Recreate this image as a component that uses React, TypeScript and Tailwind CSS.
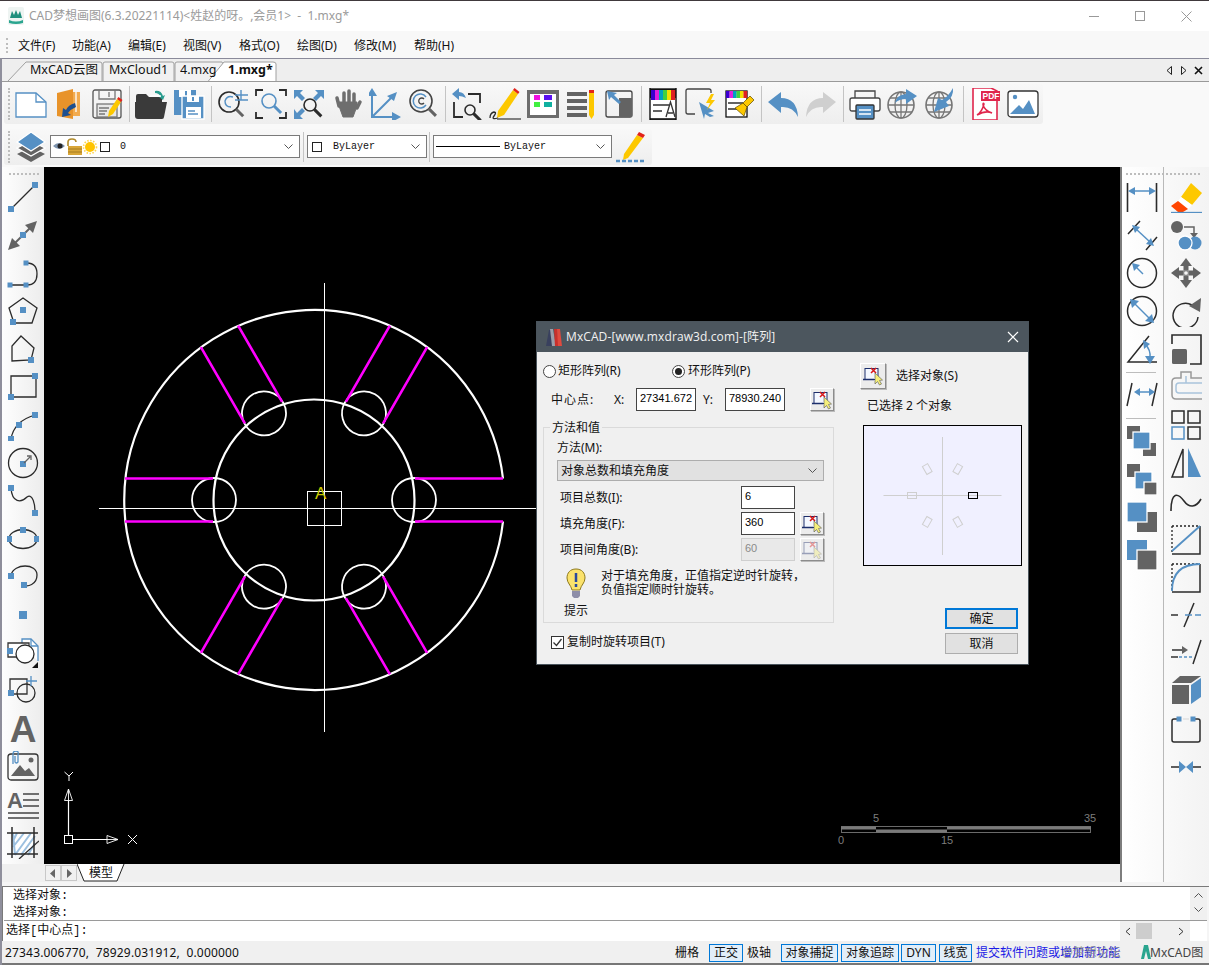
import type { ReactNode } from 'react';

const B = '#5590c4';
const G = '#636363';
const K = '#2b2b2b';
const Y = '#fdc800';
const R = '#e2231a';

function Ic({ children }: { children: ReactNode }) {
  return (
    <svg width={32} height={32} viewBox="0 0 32 32" fill="none" stroke={K} strokeWidth={1.3} className="shrink-0">
      {children}
    </svg>
  );
}

const Sq = ({ x, y, s = 6 }: { x: number; y: number; s?: number }) => (
  <rect x={x - s / 2} y={y - s / 2} width={s} height={s} fill={B} stroke="none" />
);

const Mag = ({ x, y, r, c = K, h = G }: { x: number; y: number; r: number; c?: string; h?: string }) => (
  <>
    <circle cx={x} cy={y} r={r} stroke={c} strokeWidth={1.6} />
    <path d={`M${x + r * 0.72} ${y + r * 0.72}L${x + r * 0.72 + 7} ${y + r * 0.72 + 7}`} stroke={h} strokeWidth={3} />
  </>
);

const Rainbow = ({ x, y, w, h }: { x: number; y: number; w: number; h: number }) => (
  <>
    {['#3a00d0', '#e020e0', '#00a0c0', '#40d040', '#f0e000', '#e02020'].map((c, i) => (
      <rect key={c} x={x + (i * w) / 6} y={y} width={w / 6 + 0.2} height={h} fill={c} stroke="none" />
    ))}
  </>
);

const Globe = () => (
  <>
    <circle cx={14} cy={17} r={13} stroke="#777" strokeWidth={1.6} />
    <ellipse cx={14} cy={17} rx={6} ry={13} stroke="#777" strokeWidth={1.3} />
    <path d="M14 4V30M1 17H27M3 10H25M3 24H25" stroke="#777" strokeWidth={1.3} />
  </>
);

const topIcons: ReactNode[] = [
  <Ic><path d="M1 5H21L31 14V29H1Z" stroke={B} fill="#fff" /><path d="M21 5V14H31" stroke={B} /></Ic>,
  <Ic><path d="M16 4H27V28H16Z" fill="#f2ab4f" stroke="none" /><path d="M4 5L20 1V31L4 28Z" fill="#e8932a" stroke="none" /><path d="M23 4V24" stroke="#fff" /><path d="M22 15Q15 17 13 22L10 20 9 29 18 27 15 25Q18 21 23 19Z" fill="#1d4f8f" stroke="none" /></Ic>,
  <Ic><rect x="2" y="2" width="28" height="28" rx="2" stroke="#555" /><path d="M8 2V11H24V2M18 4V9" stroke="#777" /><rect x="6" y="16" width="20" height="13" fill="#e8e8e8" stroke="#777" /><path d="M8 20H18M8 23H16M8 26H14" stroke="#777" /><path d="M26 11l4 3-8 12-5 3 1-6z" fill={Y} stroke="none" /><path d="M26 11l1.500-2 4 3-1.500 2z" fill={R} stroke="none" /></Ic>,
  'sep',
  <Ic><path d="M1 8Q1 6 3 6H11L14 9H27V14H1Z" fill="#3a3a3a" stroke="none" /><path d="M0 14H32L29 29Q29 31 27 31H3Q0 31 0 28Z" fill="#3a3a3a" stroke="none" /><path d="M20 3Q26 2 28 8L30 7 28 12 24 9 26 9Q24 5 20 5Z" fill="#2a9d8f" stroke="none" /><path d="M15 8H26" stroke="#fff" /></Ic>,
  <Ic><path d="M1 2H23V27H1Z" fill={B} stroke="none" /><path d="M6 2H18V9H6Z" fill="#fff" stroke="none" /><path d="M13 3V8" stroke={B} strokeWidth={2} /><path d="M9 8H31V31H9Z" fill={B} stroke="#fff" /><path d="M14 8H26V14H14Z" fill="#fff" stroke="none" /><path d="M20 9V13" stroke={B} strokeWidth={2} /><path d="M13 19H28V30H13Z" fill="#fff" stroke="none" /><path d="M15 23H22M15 26H25" stroke={B} /></Ic>,
  'sep',
  <Ic><Mag x={12} y={14} r={10} /><path d="M16 9Q10 7 8 13Q8 19 14 19" stroke={B} strokeWidth={1.4} /><path d="M24 2V12M18 7H31M18 12H31" stroke={B} strokeWidth={1.4} /></Ic>,
  <Ic><path d="M1 8V2H8M24 2H31V8M1 24V30H8M31 24V30H24" strokeWidth={1.8} /><Mag x={14} y={13} r={7} c={B} h={B} /></Ic>,
  <Ic><path d="M1 11V2H10L7 5 12 10 9 13 4 8ZM31 11V2H22L25 5 20 10 23 13 28 8ZM1 21V31H10L7 28 12 23 9 20 4 25Z" fill={B} stroke="none" /><Mag x={17} y={17} r={6} c={K} h={K} /></Ic>,
  <Ic><g stroke="#6e6e6e" strokeLinecap="round"><path d="M8 18L6 10M13 15V5M18 15V3M23 16V6" strokeWidth={3.5} /><path d="M26 20L29 14" strokeWidth={3.5} /><path d="M8 18L12 29H22L26 18V14H8Z" fill="#6e6e6e" strokeWidth={1} /></g></Ic>,
  <Ic><path d="M3 6V29H29M3 29L24 8" stroke={B} strokeWidth={2} /><path d="M3 0L8 8H-2ZM32 29L23 24V34ZM28 4L25 13 18 8Z" fill={B} stroke="none" /></Ic>,
  <Ic><Mag x={14} y={13} r={11} c="#444" /><path d="M19 9A7 7 0 1 0 19 17" stroke={B} strokeWidth={1.5} /><path d="M17 11A3 3 0 1 0 17 15" stroke="#444" /></Ic>,
  'sep',
  <Ic><path d="M17 6H29V15M3 14V29H12" stroke={K} strokeWidth={1.8} /><Mag x={19} y={22} r={5} c={K} h={K} /><path d="M1 6L8 0V4Q13 4 15 10 11 8 8 8V12Z" fill={B} stroke="none" /></Ic>,
  <Ic><path d="M24 2l5 4-14 21-7 3 1-7z" fill={Y} stroke="none" /><path d="M24 2l1.500-2 5 4-1.500 2z" fill={R} stroke="none" /><path d="M1 30Q1 25 5 24 8 24 5 28T9 30" /><path d="M8 31H32" stroke={G} strokeWidth={1.6} /></Ic>,
  <Ic><rect x="0" y="2" width="32" height="28" fill="#6d6d6d" stroke="none" /><rect x="3" y="6" width="26" height="21" fill="#fff" stroke="none" /><rect x="7" y="7" width="6" height="5" fill="#f010e0" stroke="none" /><rect x="7" y="14" width="6" height="5" fill="#40f040" stroke="none" /><rect x="17" y="7" width="8" height="5" fill="#5a10f0" stroke="none" /><rect x="17" y="14" width="8" height="5" fill="#10b0a0" stroke="none" /></Ic>,
  <Ic><path d="M2 6H22M2 13H22M2 20H22M2 27H22" stroke={G} strokeWidth={4} /><path d="M24 4H29V27L26.500 31 24 27Z" fill={Y} stroke="none" /><path d="M24 2H29V5H24Z" fill={R} stroke="none" /></Ic>,
  <Ic><rect x="3" y="3" width="26" height="26" rx="2" stroke="#444" /><path d="M16 10H29V29H16Z" fill={G} stroke="none" /><path d="M16 16L8 9 6 12 4 3 14 5 11 7 18 14Z" fill={B} stroke="none" /></Ic>,
  'sep',
  <Ic><rect x="3" y="0" width="26" height="32" fill="#fff" stroke="#111" strokeWidth={1.4} /><rect x="3" y="1" width="26" height="9" fill="#111" stroke="none" /><Rainbow x={4} y={2} w={24} h={10} /><path d="M6 17H22M6 23H15" stroke={G} strokeWidth={2} /><path d="M19 29L23.500 14 28 29M21 25H26" stroke="#333" /><path d="M3 31H29" stroke="#111" strokeWidth={1.6} /></Ic>,
  <Ic><path d="M26 5V3Q26 1 24 1H3Q1 1 1 3V24Q1 26 3 26H10" stroke="#444" /><path d="M13 17L28 26 22 28 28 31 24 32 19 29 18 34Z" transform="translate(1,-3)" fill={B} stroke="none" /><path d="M26 6L21 15H25L22 22 30 12H26L29 6Z" fill={Y} stroke="none" /></Ic>,
  <Ic><rect x="3" y="3" width="21" height="26" fill="#fff" stroke="#111" /><Rainbow x={3} y={3} w={21} h={7} /><path d="M5 15H20M5 21H14" stroke={G} strokeWidth={2} /><path d="M27 8L31 12 24 19 20 15Z" fill={Y} stroke="#5c4700" strokeWidth={0.7} /><path d="M20 15L24 19 21 28 12 20Z" fill={Y} stroke="#5c4700" strokeWidth={0.7} /></Ic>,
  'sep',
  <Ic><path d="M1 14L14 4V10Q30 10 31 29 26 18 14 19V25Z" fill={B} stroke="none" /></Ic>,
  <Ic><path d="M31 14L18 4V10Q2 10 1 29 6 18 18 19V25Z" fill="#cfcfcf" stroke="none" /></Ic>,
  'sep',
  <Ic><path d="M6 10V3H26V10" stroke="#444" /><path d="M1 21V12Q1 10 3 10H29Q31 10 31 12V21Q31 23 29 23H3Q1 23 1 21Z" fill="#fff" stroke="#444" /><rect x="7" y="17" width="18" height="14" rx="1" fill={B} stroke="#333" /><path d="M10 22H22M10 26H22" stroke="#fff" /></Ic>,
  <Ic><Globe /><path d="M8 15Q9 7 19 6V1L30 8 19 16V11Q12 11 8 15Z" fill={B} stroke="none" /></Ic>,
  <Ic><Globe /><path d="M28 0Q29 9 21 14L24 18 9 24 13 10 17 12Q23 9 28 0Z" fill={B} stroke="none" /></Ic>,
  'sep',
  <Ic><path d="M4 0H22L28 3V32H4Z" fill="#fff" stroke="#e0264c" strokeWidth={1.6} /><rect x="12" y="3" width="19" height="10" fill="#e0264c" stroke="none" /><text x="13.500" y="11" fontSize={8.500} fontWeight={700} fontFamily="Liberation Sans" fill="#fff" stroke="none">PDF</text><path d="M8 27Q13 24 15 16 14 14 14 17 16 23 23 25 17 22 8 27Z" stroke="#e0264c" strokeWidth={1.5} /></Ic>,
  <Ic><rect x="1" y="3" width="30" height="26" rx="3" fill="#fff" stroke="#333" /><circle cx={8} cy={9} r={2.200} fill={B} stroke="none" /><path d="M3 26L12 17 16 21 22 12 28 26Z" fill={B} stroke="none" /></Ic>,
];

const leftIcons: ReactNode[] = [
  <Ic><path d="M4 28L28 4" /><Sq x={28} y={4} /><Sq x={4} y={28} /></Ic>,
  <Ic><path d="M6 26L26 6" stroke={G} strokeWidth={2} /><path d="M30 2L26 14 18 6ZM1 31L5 19 13 27Z" fill={G} stroke="none" /><Sq x={16} y={16} /></Ic>,
  <Ic><path d="M3 28H20Q30 28 30 17T20 6" /><Sq x={3} y={28} s={5} /><Sq x={19} y={28} s={5} /><Sq x={19} y={6} s={5} /></Ic>,
  <Ic><path d="M16 3L30 13 25 28H7L2 13Z" /><Sq x={16} y={15} /><Sq x={6} y={27} /></Ic>,
  <Ic><path d="M14 3L27 15 24 27 5 28V13Z" /><Sq x={24} y={27} /></Ic>,
  <Ic><path d="M4 5H29V26H4Z" /><Sq x={28} y={5} /><Sq x={4} y={26} /></Ic>,
  <Ic><path d="M4 30Q7 12 28 6" /><Sq x={4} y={30} /><Sq x={12} y={16} /><Sq x={28} y={6} /></Ic>,
  <Ic><circle cx={16} cy={16} r={14.500} /><Sq x={16} y={17} /><path d="M17 16L23 10M20 9H24V13" stroke={G} /></Ic>,
  <Ic><path d="M4 3C5 18 14 18 20 12 26 8 28 20 28 27" /><Sq x={4} y={3} /><Sq x={28} y={28} /></Ic>,
  <Ic><ellipse cx={16} cy={16} rx={14} ry={9.500} /><Sq x={16} y={7} /><Sq x={2} y={16} /><Sq x={30} y={16} /></Ic>,
  <Ic><path d="M4 14C7 2 30 2 30 14 30 24 20 26 17 24" /><Sq x={4} y={15} /><Sq x={17} y={24} /></Ic>,
  <Ic><Sq x={16} y={16} s={8} /></Ic>,
  <Ic><path d="M15 8V2H24L31 9V24" stroke={B} fill="#fff" /><path d="M24 2V9H31" stroke={B} /><path d="M1 6H22V20H1Z" fill="#fff" stroke="#333" /><circle cx={18} cy={17} r={9} fill="#fff" stroke={K} /><Sq x={3} y={14} /><path d="M25 31L31 25V31Z" fill="#111" stroke="none" /></Ic>,
  <Ic><path d="M3 4H20V19H3Z" stroke="#333" /><circle cx={19} cy={18} r={9} stroke={K} /><Sq x={4} y={18} /><path d="M24 1V11M19 6H30" stroke={B} /></Ic>,
  <Ic><text x="16" y="29" textAnchor="middle" fontSize={37} fontWeight={700} fontFamily="Liberation Sans" fill={G} stroke="none">A</text></Ic>,
  <Ic><rect x="1" y="3" width="30" height="26" rx="3" stroke="#333" /><path d="M4 25L13 14 18 20 22 17 28 25Z" fill={G} stroke="none" /><circle cx={24} cy={9} r={2.500} fill={G} stroke="none" /><path d="M6 13V3Q6 0 9 0T11 4V11Q9 13 8 11V5" stroke={B} /></Ic>,
  <Ic><text x="0" y="19" fontSize={22} fontWeight={700} fontFamily="Liberation Sans" fill={G} stroke="none">A</text><path d="M16 5H32M16 11H32M16 17H32M1 24H32M1 29H32" stroke="#444" /></Ic>,
  <Ic><path d="M5 6H28V28H5Z" fill="#fff" stroke="none" /><path d="M6 6L8 28M10 6L6 14M17 6L6 20M24 6L8 28M28 9L14 28M28 16L21 28" stroke="#9cc0e0" strokeWidth={2} /><path d="M0 6H31M0 27H31M5 0V31M27 0V31" strokeWidth={1.5} /><path d="M12 32L32 14" stroke={K} /></Ic>,
];

const rightOne: ReactNode[] = [
  <Ic><path d="M1.500 2V31M30.500 2V31" strokeWidth={1.6} /><path d="M8 10H24" stroke={B} strokeWidth={1.5} /><path d="M2 10L9 6V14ZM30 10L23 6V14Z" fill={B} stroke="none" /></Ic>,
  <Ic><path d="M2 15L14 2M20 31L31 18" strokeWidth={1.5} /><path d="M10 10L24 23" stroke={B} strokeWidth={1.5} /><path d="M6 6L14 8 9 14ZM28 27L20 25 25 19Z" fill={B} stroke="none" /></Ic>,
  <Ic><circle cx={16} cy={16} r={14.500} strokeWidth={1.5} /><path d="M9 9L17 17" stroke={B} strokeWidth={1.5} /><path d="M6 6L14 8 8 14Z" fill={B} stroke="none" /></Ic>,
  <Ic><circle cx={16} cy={16} r={14.500} strokeWidth={1.5} /><path d="M8 8L24 24" stroke={B} strokeWidth={1.5} /><path d="M4 4L13 6 6 13ZM28 28L19 26 26 19Z" fill={B} stroke="none" /></Ic>,
  <Ic><path d="M23 3L2 29H31" strokeWidth={1.5} /><path d="M19 11Q25 17 24 25" stroke={B} strokeWidth={1.5} /><path d="M17 7L24 11 18 16ZM24 31L19 23H29Z" fill={B} stroke="none" /></Ic>,
  'hr',
  <Ic><path d="M1 27L6 4M26 27L31 4" strokeWidth={1.5} /><path d="M11 13H26" stroke={B} strokeWidth={1.5} /><path d="M8 13L14 9V17ZM29 13L23 9V17Z" fill={B} stroke="none" /></Ic>,
  'hr',
  <Ic><rect x="1" y="1" width="13" height="13" fill={G} stroke="none" /><rect x="17" y="18" width="13" height="13" fill={G} stroke="none" /><rect x="7" y="7" width="17" height="17" fill={B} stroke="#fff" /></Ic>,
  <Ic><rect x="1" y="1" width="13" height="13" fill={G} stroke="none" /><rect x="9" y="9" width="17" height="17" fill={B} stroke="#fff" /><rect x="18" y="19" width="13" height="13" fill={G} stroke="#fff" /></Ic>,
  <Ic><rect x="11" y="11" width="20" height="20" fill={G} stroke="none" /><rect x="1" y="1" width="20" height="20" fill={B} stroke="#fff" /></Ic>,
  <Ic><rect x="1" y="1" width="20" height="20" fill={B} stroke="none" /><rect x="11" y="11" width="20" height="20" fill={G} stroke="#fff" /></Ic>,
];

const rightTwo: ReactNode[] = [
  <Ic><path d="M21 2L32 12 22 24 11 16Z" fill={Y} stroke="none" /><path d="M11 16L22 24 18 28 8 20Z" fill="#fff" stroke="none" /><path d="M8 20L18 28 13 31H8L1 25Z" fill="#ff4500" stroke="none" /><path d="M1 31.500H32" stroke={B} /></Ic>,
  <Ic><circle cx={7} cy={8} r={6} fill={G} stroke="none" /><path d="M14 8H24V14" stroke={G} strokeWidth={1.5} /><path d="M20 14H28L24 19Z" fill={G} stroke="none" /><circle cx={25} cy={24} r={6.500} fill={B} stroke="none" /><circle cx={15} cy={24} r={7} fill={B} stroke="#fff" /></Ic>,
  <Ic><path d="M16 1L22 9H18.500V13.500H13.500V9H10ZM16 31L22 23H18.500V18.500H13.500V23H10ZM1 16L9 10V13.500H13.500V18.500H9V22ZM31 16L23 10V13.500H18.500V18.500H23V22Z" fill={G} stroke="none" /><circle cx={16} cy={16} r={2.500} stroke="#888" /></Ic>,
  <Ic><path d="M22 10A12.500 12.500 0 1 0 28 22" strokeWidth={1.5} /><path d="M31 3L30 17 19 11Z" fill={G} stroke="none" /></Ic>,
  <Ic><path d="M2 11V2H31V31H20" strokeWidth={1.6} /><rect x="2" y="16" width="15" height="15" rx="1.500" fill={G} stroke="none" /></Ic>,
  <Ic><path d="M32 7H21V1H11V7H6Q2 7 2 11V24Q2 28 6 28H32" stroke="#999" strokeWidth={1.5} /><path d="M32 12H16V5M16 12H9Q6 12 6 15V19Q6 22 9 22H32" stroke="#a9c4dc" strokeWidth={1.5} /></Ic>,
  <Ic><path d="M2 2H14V14H2ZM18 2H30V14H18ZM18 18H30V30H18Z" strokeWidth={1.5} /><path d="M2 18H14V30H2Z" stroke={B} strokeWidth={1.5} /></Ic>,
  <Ic><path d="M13 2L2 30H13Z" strokeWidth={1.5} /><path d="M18 1L31 30H18Z" fill={B} stroke="none" /></Ic>,
  <Ic><path d="M1 26C1 6 8 8 14 16 19 23 26 23 31 14" strokeWidth={1.6} /></Ic>,
  <Ic><path d="M2 3H30" strokeDasharray="2 2" stroke="#222" /><path d="M2 3V29" strokeDasharray="2 2" stroke="#222" /><path d="M30 3V31H2" strokeWidth={1.5} /><path d="M2 28L30 3" stroke={B} strokeWidth={1.8} /></Ic>,
  <Ic><path d="M2 3H30" strokeDasharray="2 2" stroke="#222" /><path d="M2 3V29" strokeDasharray="2 2" stroke="#222" /><path d="M30 3V31H2" strokeWidth={1.5} /><path d="M2 30C2 12 12 3 30 3" stroke={B} strokeWidth={1.8} /></Ic>,
  <Ic><path d="M14 28L24 4" strokeWidth={1.5} /><path d="M1 16H8" stroke={G} strokeWidth={2} /><path d="M15 16H31" stroke={B} strokeWidth={1.5} strokeDasharray="7 3" /></Ic>,
  <Ic><path d="M23 27L31 3" strokeWidth={1.5} /><path d="M2 13H14" stroke={G} strokeWidth={2} /><path d="M12 9L18 13 12 17Z" fill={G} stroke="none" /><path d="M1 20H8" stroke={G} strokeWidth={2} /><path d="M9 20H23" stroke={B} strokeWidth={1.5} strokeDasharray="3 2" /></Ic>,
  <Ic><path d="M2 8L10 1H31L21 8Z" fill={G} stroke="none" /><rect x="2" y="10" width="17" height="19" fill={G} stroke="none" /><path d="M21 10L31 3V22L21 29Z" fill={B} stroke="none" /></Ic>,
  <Ic><path d="M8 6H4Q2 6 2 8V27Q2 29 4 29H28Q30 29 30 27V8Q30 6 28 6H24" strokeWidth={1.5} /><path d="M13 6H19" stroke="#ddd" /><Sq x={9} y={6} s={5} /><Sq x={23} y={6} s={5} /></Ic>,
  <Ic><path d="M1 16H12M20 16H31" strokeWidth={1.7} /><path d="M9 10L16 16 9 22ZM23 10L16 16 23 22Z" fill={B} stroke="none" /></Ic>,
];

function Sep() {
  return (
    <div className="flex h-[36px] w-[6px] shrink-0 justify-center">
      <div className="h-full w-px bg-[#c4c4c4]" />
    </div>
  );
}

function Grip() {
  return <div className="ml-[2px] h-[32px] w-[4px] shrink-0 border-l-2 border-dotted border-[#bdbdbd]" />;
}

function Chevron() {
  return (
    <svg width={9} height={5} viewBox="0 0 9 5" fill="none" stroke="#555" className="shrink-0">
      <path d="M0.500 0.500L4.500 4.500 8.500 0.500" />
    </svg>
  );
}

function Layer({ children, className }: { children: ReactNode; className: string }) {
  return (
    <div className={`flex h-[23px] shrink-0 items-center border border-[#7a7a7a] bg-white ${className}`}>
      {children}
    </div>
  );
}

function PickIcon({ dim = false }: { dim?: boolean }) {
  return (
    <svg width={22} height={20} viewBox="0 0 22 20" fill="none" className={dim ? 'opacity-40' : ''}>
      <rect x="3" y="2.500" width="13" height="11" fill="#f4f8ff" stroke="#1c2f6c" />
      <path d="M1 13.500H12" stroke="#1c2f6c" strokeWidth={1.500} />
      <path d="M9 2L14 7M14 2L9 7" stroke="#d81818" strokeWidth={1.500} />
      <path d="M13 7L13 18 15.500 15.500 17.500 19 19.500 18 17.500 14.500 20.500 14Z" fill="#f5ef7a" stroke="#555" strokeWidth={0.600} />
    </svg>
  );
}

function PickButton({ dim = false, className = 'h-[23px] w-[24px]' }: { dim?: boolean; className?: string }) {
  return (
    <div className={`flex shrink-0 items-center justify-center border border-t-white border-l-white border-r-[#8c8c8c] border-b-[#8c8c8c] bg-[#ececec] shadow-[1px_1px_0_#bbb] ${className}`}>
      <PickIcon dim={dim} />
    </div>
  );
}

function Field({ value, dim = false, className = 'w-[54px]' }: { value: string; dim?: boolean; className?: string }) {
  return (
    <div className={`flex h-[23px] shrink-0 items-center border pb-[3px] pl-[3px] font-['Liberation_Sans',sans-serif] text-[11px] ${dim ? 'border-[#cfcfcf] bg-[#e9e9e9] text-[#8a8a8a]' : 'border-[#444] bg-white text-black'} ${className}`}>
      {value}
    </div>
  );
}

function Drawing() {
  const cx = 314;
  const cy = 500;
  const angles = [0, 60, 120, 180, 240, 300];
  return (
    <svg width={1076} height={697} viewBox="44 167 1076 697" fill="none" className="block">
      <path d="M503 478.500A190 190 0 1 0 503 521.500" stroke="#fff" strokeWidth={2.200} />
      <circle cx={cx} cy={cy} r={100.500} stroke="#fff" strokeWidth={2.200} />
      {angles.map((a) => (
        <g key={a} transform={`rotate(${a} ${cx} ${cy})`}>
          <circle cx={cx + 100} cy={cy} r={22} stroke="#fff" strokeWidth={1.800} />
          <path d={`M${cx + 101} ${cy - 21.500}H${cx + 189}M${cx + 101} ${cy + 21.500}H${cx + 189}`} stroke="#ff00ff" strokeWidth={2.600} />
        </g>
      ))}
      <path d="M324.500 283V732M99 508.500H537" stroke="#fff" strokeWidth={1} />
      <rect x="307.500" y="491.500" width="34" height="34" stroke="#fff" />
      <text x="315" y="499" fontSize={17} fontFamily="Liberation Sans" fill="#c8c800">A</text>

      <path d="M68.500 800V835M72 839.500H107" stroke="#fff" strokeWidth={1.200} />
      <rect x="64.500" y="835.500" width="8" height="8" stroke="#fff" />
      <path d="M68.500 789L64.500 800.500H72.500ZM68.500 789V800.500M118 839.500L107 835.500V843.500ZM107 839.500H118" stroke="#fff" strokeWidth={0.900} />
      <path d="M64.500 772L69 776 73 772M69 776V781" stroke="#fff" />
      <path d="M128 835L137 844M137 835L128 844" stroke="#fff" />

      <rect x="841.500" y="826.500" width="249" height="6" stroke="#6a6a6a" />
      <path d="M841 828H876M947 828H1091M876 831H947" stroke="#7a7a7a" strokeWidth={3} />
      <g fontFamily="Liberation Sans" fontSize={11} fill="#7d7d7d">
        <text x="873" y="822">5</text>
        <text x="1084" y="822">35</text>
        <text x="838" y="844">0</text>
        <text x="941" y="844">15</text>
      </g>
    </svg>
  );
}

function Preview() {
  const c = '#cfcfcf';
  return (
    <svg width={157} height={139} viewBox="0 0 157 139" fill="none" className="block">
      <path d="M78.500 11V129M19.500 69.500H137.500" stroke={c} />
      {[60, 120, 180, 240, 300].map((a) => (
        <rect key={a} x={104.500} y={66.500} width={9} height={6} stroke={c} transform={`rotate(${a} 78.500 69.500)`} />
      ))}
      <rect x="104.500" y="66.500" width="9" height="6" stroke="#000" />
    </svg>
  );
}

function Dialog() {
  return (
    <div className="absolute left-[492px] top-[154px] flex h-[344px] w-[493px] flex-col border border-[#4a545c] bg-[#f0f0f0] text-[12px] text-[#111]">
      <div className="flex h-[30px] shrink-0 items-center bg-[#4c565e] pl-[9px] text-[#f2f2f2]">
        <svg width={16} height={18} viewBox="0 0 16 18" className="shrink-0">
          <path d="M0 18L3 2 7 2 9 18Z" fill="#39405e" />
          <path d="M4 1L7 1 10 18 6 18Z" fill="#9a9eaa" />
          <path d="M8 1L11 1 13 18 9 18Z" fill="#c9302c" />
          <path d="M11 1L14 1 16 18 12 18Z" fill="#e04a3f" />
        </svg>
        <span className="ml-[4px] font-['Open_Sans','Noto_Sans_CJK_SC',sans-serif] tracking-[0.1px]">MxCAD-[www.mxdraw3d.com]-[阵列]</span>
        <svg width={12} height={12} viewBox="0 0 12 12" className="ml-auto mr-[9px]" stroke="#fff" strokeWidth={1.200}>
          <path d="M1 1L11 11M11 1L1 11" />
        </svg>
      </div>
      <div className="flex min-h-0 flex-1">
        <div className="w-[297px] shrink-0 pl-[6px]">
          <div className="mt-[12px] flex h-[14px] items-center">
            <div className="flex w-[129px] items-center">
              <div className="h-[13px] w-[13px] rounded-full border border-[#444] bg-white" />
              <span className="ml-[2px]">矩形阵列(R)</span>
            </div>
            <div className="flex h-[13px] w-[13px] items-center justify-center rounded-full border border-[#444] bg-white">
              <div className="h-[7px] w-[7px] rounded-full bg-[#222]" />
            </div>
            <span className="ml-[3px]">环形阵列(P)</span>
          </div>
          <div className="mt-[10px] flex h-[23px] items-center">
            <span className="ml-[8px] w-[63px] tracking-[1px]">中心点:</span>
            <span className="w-[22px]">X:</span>
            <Field value="27341.672" className="w-[60px]" />
            <span className="ml-[7px] w-[22px]">Y:</span>
            <Field value="78930.240" className="w-[60px]" />
            <PickButton className="ml-[25px] h-[23px] w-[24px]" />
          </div>
          <div className="relative mt-[16px] h-[196px] w-[291px] border border-[#dadada] pl-[13px]">
            <span className="absolute -top-[9px] left-[6px] bg-[#f0f0f0] px-[2px]">方法和值</span>
            <div className="pt-[12px] leading-[16px]">方法(M):</div>
            <div className="mt-[4px] flex h-[21px] w-[267px] items-center justify-between border border-[#adadad] bg-[#e1e1e1] px-[3px]">
              <span>对象总数和填充角度</span>
              <span className="mr-[3px]"><Chevron /></span>
            </div>
            <div className="mt-[5px] flex h-[23px] items-center pl-[3px]">
              <span className="w-[181px]">项目总数(I):</span>
              <Field value="6" />
            </div>
            <div className="mt-[3px] flex h-[23px] items-center pl-[3px]">
              <span className="w-[181px]">填充角度(F):</span>
              <Field value="360" />
              <PickButton className="ml-[5px] h-[23px] w-[24px]" />
            </div>
            <div className="mt-[3px] flex h-[23px] items-center pl-[3px]">
              <span className="w-[181px]">项目间角度(B):</span>
              <Field value="60" dim />
              <PickButton dim className="ml-[5px] h-[23px] w-[24px]" />
            </div>
            <div className="mt-[7px] flex">
              <div className="flex w-[44px] flex-col items-center pr-[6px]">
                <svg width={20} height={30} viewBox="0 0 20 30" className="shrink-0">
                  <path d="M10 1C4 1 1 5 1 10 1 15 5 17 6 22H14C15 17 19 15 19 10 19 5 16 1 10 1Z" fill="#fbe26c" stroke="#8f7a1c" />
                  <path d="M6 23H14V28L12 30H8L6 28Z" fill="#8e8ea8" />
                  <path d="M10 5V14M10 16V19" stroke="#2b4a9c" strokeWidth={2.500} />
                </svg>
                <span className="mt-[5px] leading-[16px]">提示</span>
              </div>
              <div className="pt-[1px] leading-[14px]">
                对于填充角度，正值指定逆时针旋转，<br />负值指定顺时针旋转。
              </div>
            </div>
          </div>
          <div className="mt-[12px] ml-[8px] flex h-[14px] items-center">
            <div className="flex h-[13px] w-[13px] items-center justify-center border border-[#333] bg-white">
              <svg width={11} height={11} viewBox="0 0 11 11" fill="none" stroke="#333" strokeWidth={1.300}>
                <path d="M1.500 5.500L4.500 8.500 9.500 2" />
              </svg>
            </div>
            <span className="ml-[3px]">复制时旋转项目(T)</span>
          </div>
        </div>
        <div className="flex min-w-0 flex-1 flex-col pl-[26px]">
          <div className="mt-[11px] flex h-[26px] items-center">
            <PickButton className="h-[26px] w-[26px]" />
            <span className="ml-[10px]">选择对象(S)</span>
          </div>
          <div className="ml-[7px] mt-[9px] leading-[16px]">已选择 2 个对象</div>
          <div className="ml-[3px] mt-[11px] h-[141px] w-[159px] border border-black bg-[#f0f0ff]">
            <Preview />
          </div>
          <div className="ml-[85px] mt-[42px] flex h-[21px] w-[73px] items-center justify-center border-2 border-[#0078d7] bg-[#e1e1e1]">确定</div>
          <div className="ml-[85px] mt-[4px] flex h-[21px] w-[73px] items-center justify-center border border-[#adadad] bg-[#e1e1e1]">取消</div>
        </div>
      </div>
    </div>
  );
}

function StatusBox({ label, className }: { label: string; className: string }) {
  return (
    <div className={`flex h-[18px] shrink-0 items-center justify-center border border-[#0078d7] bg-[#e2eef9] ${className}`}>
      {label}
    </div>
  );
}

export default function App() {
  return (
    <div className="relative flex h-[965px] w-[1209px] flex-col overflow-hidden bg-[#f9f9f9] font-['Noto_Sans','Noto_Sans_CJK_SC',sans-serif] text-[12px] text-[#111]">
      <div className="h-px shrink-0 bg-[#40393c]" />
      <div className="flex h-[30px] shrink-0 items-center bg-white pl-[8px]">
        <svg width={16} height={18} viewBox="0 0 16 18" className="shrink-0">
          <rect x="0" y="0" width="16" height="18" rx="2" fill="#eef4f2" />
          <path d="M2 11L4 4 6 8 8 3 10 8 12 4 14 11Z" fill="#1f8f7d" />
          <path d="M1 13Q8 16 15 13V16Q8 18 1 16Z" fill="#2aa58f" />
        </svg>
        <span className="ml-[5px] text-[12px] text-[#9b9b9b]">CAD梦想画图(6.3.20221114)&lt;姓赵的呀。,会员1&gt;&nbsp; -&nbsp; 1.mxg*</span>
        <div className="ml-auto flex">
          <div className="flex h-[30px] w-[46px] items-center justify-center">
            <div className="h-px w-[10px] bg-[#999]" />
          </div>
          <div className="flex h-[30px] w-[46px] items-center justify-center">
            <div className="h-[10px] w-[10px] border border-[#999]" />
          </div>
          <div className="flex h-[30px] w-[46px] items-center justify-center">
            <svg width={11} height={11} viewBox="0 0 11 11" stroke="#999"><path d="M0.500 0.500L10.500 10.500M10.500 0.500L0.500 10.500" /></svg>
          </div>
        </div>
      </div>
      <div className="flex h-[27px] shrink-0 items-center bg-[#f8f8f8] pl-[6px] pt-[2px]">
        <div className="h-[15px] w-[12px] shrink-0 border-l-2 border-dotted border-[#bdbdbd]" />
        <span className="w-[54px]">文件(F)</span>
        <span className="w-[56px]">功能(A)</span>
        <span className="w-[55px]">编辑(E)</span>
        <span className="w-[56px]">视图(V)</span>
        <span className="w-[58px]">格式(O)</span>
        <span className="w-[57px]">绘图(D)</span>
        <span className="w-[60px]">修改(M)</span>
        <span>帮助(H)</span>
      </div>

      <div className="flex min-h-0 flex-1 flex-col border-l-2 border-[#8f8f9c]">
        <div className="relative flex h-[24px] shrink-0 items-center border-y border-t-[#8a8a9a] border-b-[#9a9a9a] bg-[#eeeeee] text-[12.500px]">
          <svg width={290} height={22} viewBox="2 59 290 22" className="absolute left-0 top-0" fill="#f1f1f1" stroke="#a0a0a0">
            <path d="M8 81L26 62H100Q102 62 102 64V81" />
            <path d="M103 81V64Q103 62 105 62H172Q174 62 174 64V81" />
            <path d="M175 81V64Q175 62 177 62H222L232 81" />
            <path d="M208 81.500L224 62H273Q276 62 276 64V81.500" fill="#fff" />
          </svg>
          <span className="absolute left-[28px] top-[2px]">MxCAD云图</span>
          <span className="absolute left-[107px] top-[2px]">MxCloud1</span>
          <span className="absolute left-[178px] top-[2px] w-[36px] overflow-hidden whitespace-nowrap">4.mxg</span>
          <span className="absolute left-[226px] top-[2px] font-bold">1.mxg*</span>
          <div className="ml-auto flex items-center gap-[7px] pr-[6px]">
            <svg width={7} height={9} viewBox="0 0 7 9" fill="none" stroke="#222"><path d="M5.500 0.500V8.500L1 4.500Z" /></svg>
            <svg width={7} height={9} viewBox="0 0 7 9" fill="none" stroke="#222"><path d="M1.500 0.500V8.500L6 4.500Z" /></svg>
            <svg width={9} height={9} viewBox="0 0 9 9" stroke="#111" strokeWidth={1.600}><path d="M1 1L8 8M8 1L1 8" /></svg>
          </div>
        </div>

        <div className="flex h-[44px] shrink-0 items-center pl-[2px]">
          <div className="flex h-[40px] w-[1039px] items-center rounded-[3px] bg-gradient-to-b from-[#f8f8f8] to-[#eeeeee] pl-[2px]">
            <Grip />
            {topIcons.map((ic, i) =>
              ic === 'sep' ? (
                <Sep key={i} />
              ) : (
                <div key={i} className="flex h-[38px] w-[38px] shrink-0 items-center justify-center">{ic}</div>
              ),
            )}
          </div>
        </div>

        <div className="flex h-[41px] shrink-0 items-center pl-[2px]">
          <div className="flex h-[36px] w-[648px] items-center rounded-[3px] bg-gradient-to-b from-[#f8f8f8] to-[#eeeeee] pl-[2px]">
            <Grip />
            <div className="flex h-[36px] w-[38px] shrink-0 items-center justify-center">
              <Ic>
                <path d="M2 23L16 16 30 23 16 31Z" fill={G} stroke="none" />
                <path d="M2 17L16 10 30 17 16 25Z" fill={G} stroke="#fff" />
                <path d="M2 11L16 1 30 11 16 20Z" fill={B} stroke="#fff" />
              </Ic>
            </div>
            <Layer className="w-[250px] pl-[2px]">
              <svg width={46} height={18} viewBox="0 0 46 18" className="shrink-0">
                <path d="M0 8Q6 2 12 8 6 14 0 8Z" fill="#7d93ae" />
                <circle cx={7} cy={8} r={2.500} fill="#222" />
                <path d="M15 8V4Q15 1 19 1T23 4" fill="none" stroke="#b08a2a" strokeWidth={1.600} />
                <rect x="15" y="8" width="14" height="9" fill="#d9a638" />
                <path d="M15 11H29M15 14H29" stroke="#8f6b18" strokeWidth={0.700} />
                <circle cx={37} cy={9} r={5} fill="#ffc400" />
                <circle cx={37} cy={9} r={6.500} fill="none" stroke="#ffd64a" strokeDasharray="1.500 1.500" strokeWidth={1.600} />
              </svg>
              <div className="ml-[1px] h-[10px] w-[10px] shrink-0 border border-[#222]" />
              <span className="ml-[10px] font-['Liberation_Mono',monospace] text-[10px]">0</span>
              <span className="ml-auto mr-[6px]"><Chevron /></span>
            </Layer>
            <div className="mx-[3px] h-[30px] w-px shrink-0 bg-[#c4c4c4]" />
            <Layer className="w-[120px] pl-[4px]">
              <div className="h-[10px] w-[10px] shrink-0 border border-[#222]" />
              <span className="ml-[11px] font-['Liberation_Mono',monospace] text-[10px]">ByLayer</span>
              <span className="ml-auto mr-[6px]"><Chevron /></span>
            </Layer>
            <div className="mx-[2px] h-[30px] w-px shrink-0 bg-[#c4c4c4]" />
            <Layer className="ml-[1px] w-[179px] pl-[2px]">
              <div className="h-px w-[64px] shrink-0 bg-black" />
              <span className="ml-[4px] font-['Liberation_Mono',monospace] text-[10px]">ByLayer</span>
              <span className="ml-auto mr-[6px]"><Chevron /></span>
            </Layer>
            <div className="ml-[3px] flex h-[36px] w-[32px] shrink-0 items-center justify-center">
              <Ic>
                <path d="M22 4L28 7 13 27 8 29 9 23Z" fill={Y} stroke="none" />
                <path d="M22 4L24 1 30 4 28 7Z" fill={R} stroke="none" />
                <path d="M1 30H31" stroke={B} strokeWidth={2.500} strokeDasharray="4 2" />
              </Ic>
            </div>
          </div>
        </div>

        <div className="flex h-[715px] shrink-0">
          <div className="flex w-[42px] shrink-0 flex-col">
            <div className="flex h-[697px] flex-col bg-gradient-to-r from-[#fefefe] to-[#ececec] pl-[5px]">
              <div className="ml-[2px] mt-[6px] h-[5px] w-[30px] shrink-0 border-t-2 border-dotted border-[#bdbdbd]" />
              {leftIcons.map((ic, i) => (
                <div key={i} className="flex h-[38px] shrink-0 items-center">{ic}</div>
              ))}
            </div>
            <div className="flex-1 bg-[#f0f0f0]" />
          </div>
          <div className="flex w-[1076px] shrink-0 flex-col">
            <div className="relative h-[697px] bg-black">
              <Drawing />
              <Dialog />
            </div>
            <div className="flex h-[18px] items-center bg-[#f0f0f0] pl-px">
              <div className="flex h-[16px] w-[16px] items-center justify-center border border-[#c8c8c8]">
                <svg width={6} height={9} viewBox="0 0 6 9" fill="#666"><path d="M5 0V9L0 4.500Z" /></svg>
              </div>
              <div className="flex h-[16px] w-[16px] items-center justify-center border border-[#c8c8c8]">
                <svg width={6} height={9} viewBox="0 0 6 9" fill="#666"><path d="M1 0V9L6 4.500Z" /></svg>
              </div>
              <div className="relative flex h-[18px] w-[48px] items-center justify-center">
                <svg width={48} height={18} viewBox="0 0 48 18" fill="#fff" stroke="#222" className="absolute inset-0">
                  <path d="M0 0L7 17H40L47 0" />
                </svg>
                <span className="relative">模型</span>
              </div>
            </div>
          </div>
          <div className="flex min-w-0 flex-1 border-l-2 border-[#7d7d7d] bg-gradient-to-r from-[#ffffff] to-[#f3f3f3]">
            <div className="flex w-[41px] shrink-0 flex-col pl-[4px]">
              <div className="mt-[6px] h-[5px] w-[74px] shrink-0 border-t-2 border-dotted border-[#bdbdbd]" />
              {rightOne.map((ic, i) =>
                ic === 'hr' ? (
                  <div key={i} className="flex h-[8px] shrink-0 items-center">
                    <div className="h-px w-[30px] bg-[#bdbdbd]" />
                  </div>
                ) : (
                  <div key={i} className="flex h-[38px] shrink-0 items-center">{ic}</div>
                ),
              )}
            </div>
            <div className="flex w-[46px] shrink-0 flex-col border-l border-[#b9b9b9] pl-[6px] pt-[11px]">
              {rightTwo.map((ic, i) => (
                <div key={i} className="flex h-[38px] shrink-0 items-center">{ic}</div>
              ))}
            </div>
          </div>
        </div>

        <div className="h-[4px] shrink-0 bg-[#f5f5f5]" />
        <div className="flex h-[55px] shrink-0 border-t border-l border-[#7a7a7a] bg-white pl-[1px]">
          <div className="flex min-w-0 flex-1 flex-col font-['Liberation_Mono','Noto_Sans_CJK_SC',monospace]">
            <div className="flex h-[33px] shrink-0">
              <div className="flex-1 pl-[9px] pt-[1px] leading-[17px]">
                <div>选择对象:</div>
                <div>选择对象:</div>
              </div>
              <div className="flex w-[17px] flex-col items-center gap-[9px] bg-[#f0f0f0] pt-[6px]">
                <span className="rotate-180"><Chevron /></span>
                <Chevron />
              </div>
            </div>
            <div className="flex h-[21px] shrink-0 border-t border-[#9a9a9a]">
              <div className="flex-1 pl-[2px] pt-[1px] leading-[18px]">选择[中心点]:</div>
              <div className="flex h-[20px] w-[70px] items-center bg-[#f0f0f0] pl-[5px]">
                <svg width={6} height={9} viewBox="0 0 6 9" fill="none" stroke="#333"><path d="M5 1L1 4.500 5 8" /></svg>
                <div className="ml-[5px] h-[16px] w-[16px] bg-[#cdcdcd]" />
                <svg width={6} height={9} viewBox="0 0 6 9" fill="none" stroke="#333" className="ml-[26px]"><path d="M1 1L5 4.500 1 8" /></svg>
              </div>
              <div className="w-[17px]" />
            </div>
          </div>
          <div className="w-[2px] shrink-0 bg-[#f5f5f5]" />
        </div>
        <div className="relative flex min-h-0 flex-1 items-center border-b-2 border-[#777] bg-[#f0f0f0] pl-[3px] pt-[2px]">
          <span className="w-[670px] shrink-0 tracking-[0.17px]">27343.006770,&nbsp; 78929.031912,&nbsp; 0.000000</span>
          <span className="w-[34px] shrink-0">栅格</span>
          <StatusBox label="正交" className="w-[34px]" />
          <span className="w-[38px] shrink-0 pl-[4px]">极轴</span>
          <StatusBox label="对象捕捉" className="w-[57px]" />
          <StatusBox label="对象追踪" className="ml-[3px] w-[58px]" />
          <StatusBox label="DYN" className="ml-[2px] w-[35px]" />
          <StatusBox label="线宽" className="ml-[3px] w-[33px]" />
          <span className="ml-[4px] shrink-0 text-[#1a1ae6]">提交软件问题或增加新功能</span>
          <span className="absolute left-[1060px] top-[3px] text-[#8a8a8a] opacity-80">@梦想论坛</span>
          <svg width={10} height={14} viewBox="0 0 10 14" className="absolute left-[1139px] top-[4px]">
            <path d="M0 14L3 0H7L10 14H7L5 6 3 14Z" fill="#2aa58f" />
          </svg>
          <span className="absolute left-[1148px] top-[3px] text-[#444]">MxCAD图</span>
        </div>
      </div>
    </div>
  );
}
